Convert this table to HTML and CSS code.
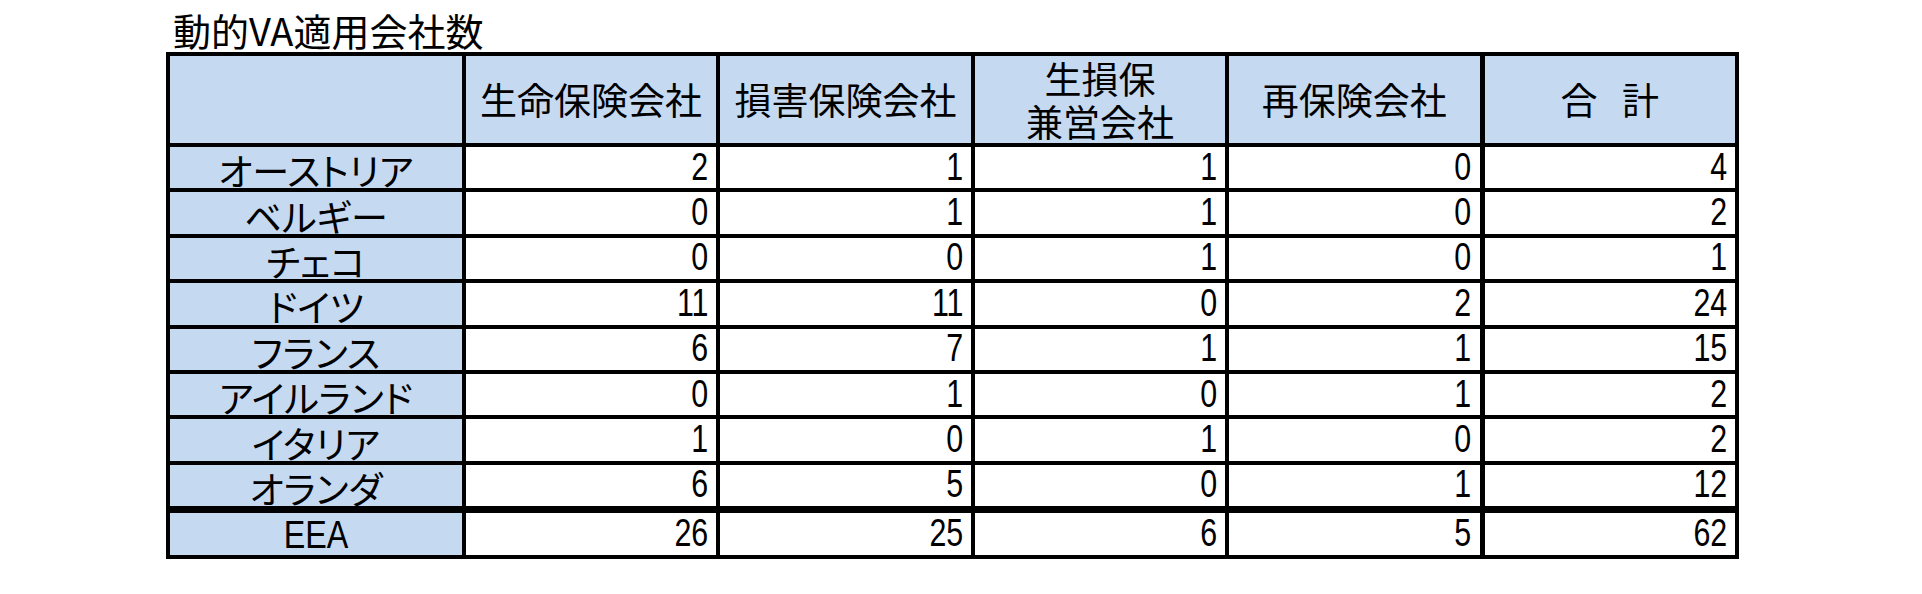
FILE: index.html
```html
<!DOCTYPE html>
<html lang="ja">
<head>
<meta charset="utf-8">
<title>動的VA適用会社数</title>
<link rel="stylesheet" href="styles.css">
</head>
<body>
<div class="page">
  <h1 class="title">動的VA適用会社数</h1>
  <table class="grid">
    <colgroup>
      <col class="c-label">
      <col class="c-a">
      <col class="c-b">
      <col class="c-c">
      <col class="c-d">
      <col class="c-e">
    </colgroup>
    <thead>
      <tr>
        <th class="hd"></th>
        <th class="hd">生命保険会社</th>
        <th class="hd">損害保険会社</th>
        <th class="hd">生損保<br>兼営会社</th>
        <th class="hd">再保険会社</th>
        <th class="hd total sum">合 計</th>
      </tr>
    </thead>
    <tbody>
      <tr><th class="lb">オーストリア</th><td><span class="n">2</span></td><td><span class="n">1</span></td><td><span class="n">1</span></td><td><span class="n">0</span></td><td class="total"><span class="n">4</span></td></tr>
      <tr><th class="lb">ベルギー</th><td><span class="n">0</span></td><td><span class="n">1</span></td><td><span class="n">1</span></td><td><span class="n">0</span></td><td class="total"><span class="n">2</span></td></tr>
      <tr><th class="lb">チェコ</th><td><span class="n">0</span></td><td><span class="n">0</span></td><td><span class="n">1</span></td><td><span class="n">0</span></td><td class="total"><span class="n">1</span></td></tr>
      <tr><th class="lb">ドイツ</th><td><span class="n">11</span></td><td><span class="n">11</span></td><td><span class="n">0</span></td><td><span class="n">2</span></td><td class="total"><span class="n">24</span></td></tr>
      <tr><th class="lb">フランス</th><td><span class="n">6</span></td><td><span class="n">7</span></td><td><span class="n">1</span></td><td><span class="n">1</span></td><td class="total"><span class="n">15</span></td></tr>
      <tr><th class="lb">アイルランド</th><td><span class="n">0</span></td><td><span class="n">1</span></td><td><span class="n">0</span></td><td><span class="n">1</span></td><td class="total"><span class="n">2</span></td></tr>
      <tr><th class="lb">イタリア</th><td><span class="n">1</span></td><td><span class="n">0</span></td><td><span class="n">1</span></td><td><span class="n">0</span></td><td class="total"><span class="n">2</span></td></tr>
      <tr><th class="lb">オランダ</th><td><span class="n">6</span></td><td><span class="n">5</span></td><td><span class="n">0</span></td><td><span class="n">1</span></td><td class="total"><span class="n">12</span></td></tr>
    </tbody>
    <tfoot>
      <tr class="foot"><th class="lb eea"><span class="n mid">EEA</span></th><td><span class="n">26</span></td><td><span class="n">25</span></td><td><span class="n">6</span></td><td><span class="n">5</span></td><td class="total"><span class="n">62</span></td></tr>
    </tfoot>
  </table>
</div>
</body>
</html>
```

FILE: styles.css
```css
html, body {
  margin: 0;
  padding: 0;
  background: #ffffff;
}

body {
  font-family: "Noto Sans CJK JP", "Noto Sans", sans-serif;
  color: #000000;
}

.page {
  padding: 11px 0 0 166px;
}

.title {
  margin: 0 0 3px 0;
  padding-left: 7px;
  height: 38px;
  font-size: 38px;
  font-weight: 400;
  line-height: 38px;
}

.grid {
  border-collapse: collapse;
  table-layout: fixed;
  width: 1573px;
}

.c-label { width: 296px; }
.c-a { width: 254px; }
.c-b { width: 255px; }
.c-c { width: 254px; }
.c-d { width: 255px; }
.c-e { width: 255px; }

.grid th,
.grid td {
  box-sizing: border-box;
  border: 4px solid #000000;
  padding: 0;
}

.hd {
  height: 91px;
  background: #c5d9f1;
  font-size: 37px;
  font-weight: 400;
  line-height: 43px;
  text-align: center;
  vertical-align: middle;
}

.sum {
  word-spacing: 16px;
}

.lb {
  height: 45.4px;
  padding-top: 5px !important;
  background: #c5d9f1;
  font-size: 37px;
  font-weight: 400;
  line-height: 36px;
  text-align: center;
  vertical-align: middle;
  font-feature-settings: "palt";
  white-space: nowrap;
}

.grid td {
  height: 45.4px;
  padding: 0 8px 2px 0;
  font-family: "Liberation Sans", Arial, sans-serif;
  font-size: 38px;
  line-height: 34px;
  text-align: right;
  vertical-align: middle;
}

.grid .total {
  border-left-width: 5px;
}

.n {
  display: inline-block;
  transform: scaleX(0.8);
  transform-origin: right center;
}

.foot th,
.foot td {
  height: 48px;
  border-top-width: 7px;
}

.eea {
  padding-top: 2px !important;
  font-family: "Liberation Sans", Arial, sans-serif;
  font-size: 38px;
  line-height: 34px;
}

.n.mid {
  transform: scaleX(0.85);
  transform-origin: center center;
}
```
